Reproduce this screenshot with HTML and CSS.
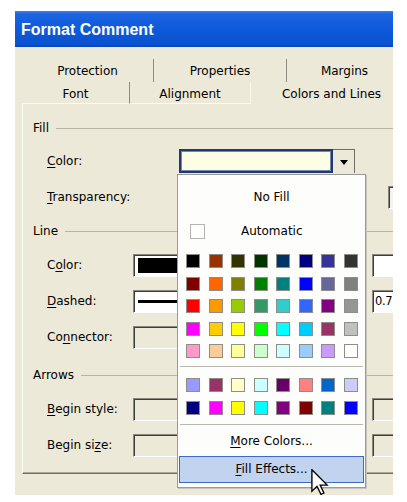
FILE: index.html
```html
<!DOCTYPE html>
<html>
<head>
<meta charset="utf-8">
<title>Format Comment</title>
<link rel="stylesheet" href="styles.css">
</head>
<body>
<div class="window">
  <div class="titlebar">Format Comment</div>
  <div class="client">
    <div class="tabs">
      <div class="tabrow back">
        <div class="tab t-prot">Protection</div>
        <div class="tab t-prop">Properties</div>
        <div class="tab t-marg">Margins</div>
      </div>
      <div class="tabrow front">
        <div class="tab t-font">Font</div>
        <div class="tab t-align">Alignment</div>
        <div class="tab t-colors active">Colors and Lines</div>
      </div>
    </div>
    <div class="panel">
      <div class="group g-fill">
        <div class="ghead">Fill</div>
        <div class="row first">
          <span class="lbl wide"><u>C</u>olor:</span>
          <div class="combo">
            <div class="combo-field"></div>
            <div class="combo-btn"><span class="arrow"></span></div>
          </div>
        </div>
        <div class="row">
          <span class="lbl wide"><u>T</u>ransparency:</span>
          <div class="box spinbox"></div>
        </div>
      </div>
      <div class="group g-line">
        <div class="ghead">Line</div>
        <div class="row first">
          <span class="lbl">C<u>o</u>lor:</span>
          <div class="box lbox white"><div class="blackfill"></div></div>
          <div class="box rbox white"></div>
        </div>
        <div class="row">
          <span class="lbl"><u>D</u>ashed:</span>
          <div class="box lbox white"><div class="dashline"></div></div>
          <div class="box rbox white weight">0.7</div>
        </div>
        <div class="row">
          <span class="lbl">Co<u>n</u>nector:</span>
          <div class="box lbox"></div>
        </div>
      </div>
      <div class="group g-arrows">
        <div class="ghead">Arrows</div>
        <div class="row first">
          <span class="lbl"><u>B</u>egin style:</span>
          <div class="box lbox"></div>
          <div class="box rbox"></div>
        </div>
        <div class="row">
          <span class="lbl">Begin si<u>z</u>e:</span>
          <div class="box lbox"></div>
          <div class="box rbox"></div>
        </div>
      </div>
    </div>
  </div>

  <div class="popup">
    <div class="pitem nofill">No Fill</div>
    <div class="pitem auto"><span class="autobox"></span><span>Automatic</span></div>
    <div class="swatches main">
      <span class="sw" style="background:#000000"></span>
      <span class="sw" style="background:#993300"></span>
      <span class="sw" style="background:#333300"></span>
      <span class="sw" style="background:#003300"></span>
      <span class="sw" style="background:#003366"></span>
      <span class="sw" style="background:#000080"></span>
      <span class="sw" style="background:#333399"></span>
      <span class="sw" style="background:#333333"></span>
      <span class="sw" style="background:#800000"></span>
      <span class="sw" style="background:#FF6600"></span>
      <span class="sw" style="background:#808000"></span>
      <span class="sw" style="background:#008000"></span>
      <span class="sw" style="background:#008080"></span>
      <span class="sw" style="background:#0000FF"></span>
      <span class="sw" style="background:#666699"></span>
      <span class="sw" style="background:#808080"></span>
      <span class="sw" style="background:#FF0000"></span>
      <span class="sw" style="background:#FF9900"></span>
      <span class="sw" style="background:#99CC00"></span>
      <span class="sw" style="background:#339966"></span>
      <span class="sw" style="background:#33CCCC"></span>
      <span class="sw" style="background:#3366FF"></span>
      <span class="sw" style="background:#800080"></span>
      <span class="sw" style="background:#969696"></span>
      <span class="sw" style="background:#FF00FF"></span>
      <span class="sw" style="background:#FFCC00"></span>
      <span class="sw" style="background:#FFFF00"></span>
      <span class="sw" style="background:#00FF00"></span>
      <span class="sw" style="background:#00FFFF"></span>
      <span class="sw" style="background:#00CCFF"></span>
      <span class="sw" style="background:#993366"></span>
      <span class="sw" style="background:#C0C0C0"></span>
      <span class="sw" style="background:#FF99CC"></span>
      <span class="sw" style="background:#FFCC99"></span>
      <span class="sw" style="background:#FFFF99"></span>
      <span class="sw" style="background:#CCFFCC"></span>
      <span class="sw" style="background:#CCFFFF"></span>
      <span class="sw" style="background:#99CCFF"></span>
      <span class="sw" style="background:#CC99FF"></span>
      <span class="sw" style="background:#FFFFFF"></span>
    </div>
    <div class="psep"></div>
    <div class="swatches chart">
      <span class="sw" style="background:#9999FF"></span>
      <span class="sw" style="background:#993366"></span>
      <span class="sw" style="background:#FFFFCC"></span>
      <span class="sw" style="background:#CCFFFF"></span>
      <span class="sw" style="background:#660066"></span>
      <span class="sw" style="background:#FF8080"></span>
      <span class="sw" style="background:#0066CC"></span>
      <span class="sw" style="background:#CCCCFF"></span>
      <span class="sw" style="background:#000080"></span>
      <span class="sw" style="background:#FF00FF"></span>
      <span class="sw" style="background:#FFFF00"></span>
      <span class="sw" style="background:#00FFFF"></span>
      <span class="sw" style="background:#800080"></span>
      <span class="sw" style="background:#800000"></span>
      <span class="sw" style="background:#008080"></span>
      <span class="sw" style="background:#0000FF"></span>
    </div>
    <div class="psep sep2"></div>
    <div class="pitem more"><span><u>M</u>ore Colors...</span></div>
    <div class="pitem effects"><span><u>F</u>ill Effects...</span></div>
  </div>

  <svg class="cursor" width="18" height="27" viewBox="0 0 13 20" aria-hidden="true">
    <path d="M0.5 0.5 L0.5 16.5 L4.3 12.8 L7.2 18.8 L9.4 17.8 L6.6 11.9 L11.8 11.9 Z" fill="#fff" stroke="#000" stroke-width="1" stroke-linejoin="miter"/>
  </svg>
</div>
</body>
</html>
```
FILE: styles.css
```css
* { box-sizing: border-box; }

html, body {
  margin: 0;
  padding: 0;
  background: #ffffff;
}

body {
  font-family: "DejaVu Sans", Tahoma, sans-serif;
  font-size: 12px;
  color: #000;
}

u { text-decoration-thickness: 1px; text-underline-offset: 2px; }

.window {
  position: relative;
  margin: 11px 0 0 15px;
  width: 378px;
  overflow: hidden;
}

.titlebar {
  height: 36px;
  background: linear-gradient(#3c82f0 0, #1c64e2 3px, #0e5ada 50%, #0a53cf 92%, #0846b8 100%);
  color: #fff;
  font-family: "Liberation Sans", Arial, sans-serif;
  font-weight: bold;
  font-size: 16px;
  line-height: 38px;
  padding-left: 6px;
}

.client {
  background: #ece9d8;
  height: 448px;
  padding-top: 12px;
}

/* tabs */
.tabrow {
  display: flex;
  margin-left: 7px;
  width: 420px;
}
.back .tab { height: 23px; }
.front .tab { height: 22px; padding-top: 2px; }

.tab {
  flex: none;
  display: flex;
  align-items: center;
  justify-content: center;
  border-right: 1px solid #8d8b7e;
}
.front .tab { border-bottom: 1px solid #fbfbf6; }
.front .tab.active { border-bottom-color: transparent; border-right: none; }

.t-prot { width: 132px; }
.t-prop { width: 133px; }
.t-marg { width: 116px; }
.t-font { width: 108px; }
.t-align { width: 121px; border-right-color: #f7f6ef !important; }
.t-colors { width: 161px; }

/* panel */
.panel {
  margin-left: 7px;
  width: 420px;
  height: 370px;
  border-left: 1px solid #fbfbf6;
  border-bottom: 1px solid #6f6d62;
  box-shadow: inset 0 -1px 0 #aca899;
  padding-left: 10px;
}

.ghead {
  height: 24px;
  display: flex;
  align-items: center;
}
.ghead::after {
  content: "";
  flex: 1;
  margin-left: 7px;
  border-top: 1px solid #b8b5a6;
}

.g-fill { padding-top: 12px; }
.g-line { margin-top: 4px; }
.g-arrows { margin-top: 8px; }

.row {
  height: 36px;
  display: flex;
  align-items: center;
  padding-left: 14px;
}
.row.first { margin-top: 3px; }
.g-line .row.first, .g-arrows .row.first { margin-top: 4px; }

.lbl { flex: none; width: 86px; }
.lbl.wide { width: 132px; }

/* fill color combo */
.combo {
  flex: none;
  display: flex;
  width: 176px;
  height: 24px;
}
.combo-field {
  width: 154px;
  height: 24px;
  border: 2px solid #22396a;
  box-shadow: 0 0 0 1px #6f86b3 inset;
  background: #fffde3;
}
.combo-btn {
  width: 22px;
  height: 24px;
  background: #ece9d8;
  border-top: 1px solid #716f64;
  border-right: 1px solid #716f64;
  display: flex;
  align-items: center;
  justify-content: center;
}
.arrow {
  width: 0;
  height: 0;
  border-left: 4px solid transparent;
  border-right: 4px solid transparent;
  border-top: 5px solid #000;
  margin-top: 1px;
}

/* generic sunken boxes */
.box {
  flex: none;
  height: 23px;
  border-top: 1px solid #8a887c;
  border-left: 1px solid #8a887c;
  border-right: 1px solid #ffffff;
  border-bottom: 1px solid #ffffff;
  box-shadow: inset 1px 1px 0 #3e3e38;
  background: #ece9d8;
}
.box.white { background: #ffffff; }

.lbox { width: 150px; padding: 3px 0 3px 4px; }
.rbox { width: 40px; margin-left: 89px; }
.spinbox { width: 30px; height: 23px; margin-left: 209px; background: #f4f3ee; }

.blackfill { height: 100%; background: #000; }
.dashline { height: 3px; background: #000; margin-top: 6px; }

.weight {
  font-size: 11.5px;
  letter-spacing: -0.3px;
  line-height: 20px;
  padding-left: 2px;
  overflow: hidden;
  white-space: nowrap;
}

/* popup palette */
.popup {
  position: absolute;
  left: 162px;
  top: 163px;
  width: 189px;
  height: 314px;
  background: #fdfdfb;
  border: 1px solid #9b9a94;
  box-shadow: 1px 1px 0 #c8c6bc;
}

.pitem {
  display: flex;
  align-items: center;
  justify-content: center;
}
.nofill { height: 44px; }
.auto {
  height: 24px;
  justify-content: flex-start;
  padding-left: 12px;
}
.autobox {
  width: 15px;
  height: 15px;
  border: 1px solid #b4b4b0;
  background: #fff;
  margin-right: 36px;
}

.swatches {
  display: grid;
  grid-template-columns: repeat(8, 14px);
  column-gap: 8.5px;
  row-gap: 8.5px;
  padding-left: 8px;
}
.swatches.main { margin-top: 11px; }
.swatches.chart { margin-top: 11px; }

.sw {
  width: 14px;
  height: 14px;
  border: 1px solid #8e8e88;
}

.psep {
  height: 1px;
  margin: 8px 2px 0 2px;
  background: #b9b8b0;
}
.psep.sep2 { margin-top: 9px; }

.more { height: 29px; margin-top: 2px; }
.effects {
  height: 27px;
  margin: 0 1px;
  background: #c1d3ef;
  border: 1px solid #3a6bc4;
}

.cursor {
  position: absolute;
  left: 296px;
  top: 458px;
}
```
